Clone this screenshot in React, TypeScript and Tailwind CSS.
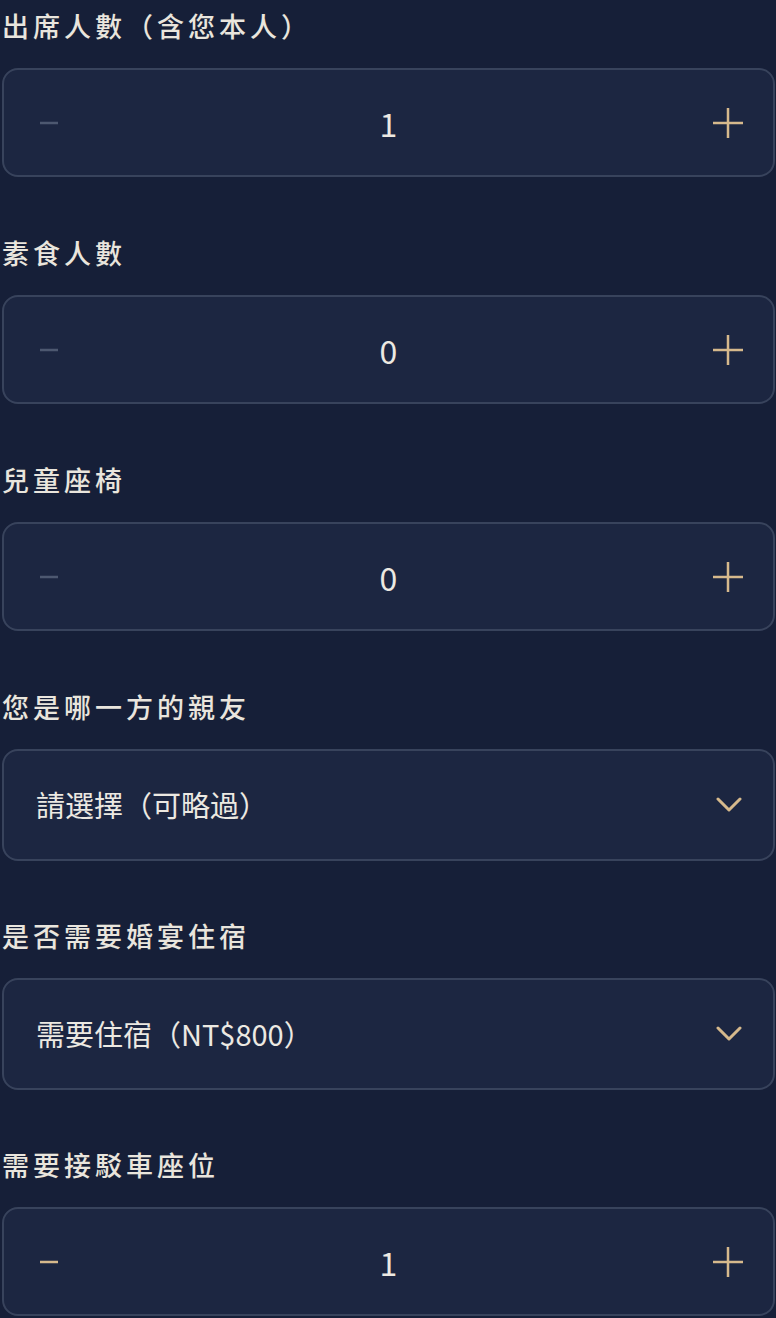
import React, { useState } from 'react';

const FONT = '"Noto Sans CJK SC", "Noto Sans", sans-serif';

interface StepperProps {
  label: string;
  value: number;
  min?: number;
  onChange: (v: number) => void;
}

const FieldLabel: React.FC<{ children: React.ReactNode }> = ({ children }) => (
  <div className="text-[27px] leading-[36px] tracking-[4px] font-medium text-[#e9e5dd] mb-6">{children}</div>
);

const Stepper: React.FC<StepperProps> = ({ label, value, min = 0, onChange }) => {
  const canDec = value > min;
  return (
    <div className="mb-[58px]">
      <FieldLabel>{label}</FieldLabel>
      <div className="h-[109px] rounded-[16px] border-2 border-[#38435c] bg-[#1c2641] flex items-center justify-between">
        <button
          onClick={() => canDec && onChange(value - 1)}
          className="w-[90px] h-full flex items-center justify-center"
        >
          <svg width="18" height="4" viewBox="0 0 18 4">
            <line x1="0" y1="2" x2="18" y2="2" stroke={canDec ? '#d6b98c' : '#4d5870'} strokeWidth="2.5" />
          </svg>
        </button>
        <span className="text-[32px] leading-none text-[#ece9e2]">{value}</span>
        <button
          onClick={() => onChange(value + 1)}
          className="w-[90px] h-full flex items-center justify-center"
        >
          <svg width="30" height="30" viewBox="0 0 30 30">
            <line x1="0" y1="15" x2="30" y2="15" stroke="#d6b98c" strokeWidth="2.5" />
            <line x1="15" y1="0" x2="15" y2="30" stroke="#d6b98c" strokeWidth="2.5" />
          </svg>
        </button>
      </div>
    </div>
  );
};

const SelectField: React.FC<{ label: string; text: string }> = ({ label, text }) => (
  <div className="mb-[57px]">
    <FieldLabel>{label}</FieldLabel>
    <div className="h-[112px] rounded-[16px] border-2 border-[#38435c] bg-[#1c2641] flex items-center justify-between pl-[32px] pr-[31px]">
      <span className="text-[29px] text-[#ece9e2]">{text}</span>
      <svg width="26" height="16" viewBox="0 0 26 16" fill="none">
        <path d="M2 2l11 11L24 2" stroke="#d6b98c" strokeWidth="3" strokeLinecap="round" strokeLinejoin="round" />
      </svg>
    </div>
  </div>
);

export default function App() {
  const [guests, setGuests] = useState(1);
  const [veg, setVeg] = useState(0);
  const [seats, setSeats] = useState(0);
  const [shuttle, setShuttle] = useState(1);

  return (
    <div className="min-h-screen bg-[#161f38] pt-[8px] pl-[2px] pr-px" style={{ fontFamily: FONT }}>
      <Stepper label="出席人數（含您本人）" value={guests} min={1} onChange={setGuests} />
      <Stepper label="素食人數" value={veg} onChange={setVeg} />
      <Stepper label="兒童座椅" value={seats} onChange={setSeats} />
      <SelectField label="您是哪一方的親友" text="請選擇（可略過）" />
      <SelectField label="是否需要婚宴住宿" text="需要住宿（NT$800）" />
      <Stepper label="需要接駁車座位" value={shuttle} onChange={setShuttle} />
    </div>
  );
}
